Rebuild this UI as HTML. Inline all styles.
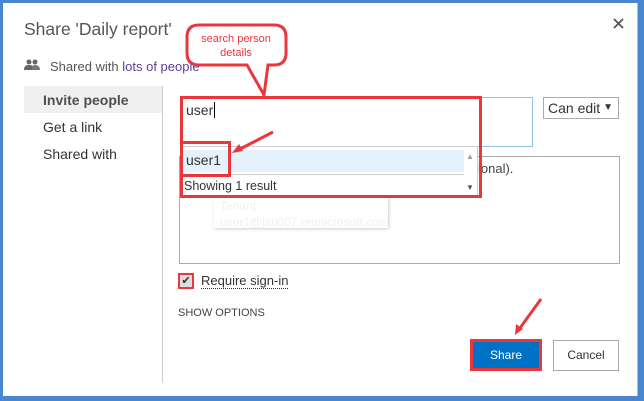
<!DOCTYPE html>
<html><head><meta charset="utf-8"><style>
body{margin:0;width:644px;height:401px;overflow:hidden;background:#4a85d0;font-family:"Liberation Sans",sans-serif;position:relative}
.a{position:absolute}
</style></head><body>
<div class="a" style="left:3px;top:3px;width:634px;height:393px;background:#fff;border-right:1px solid #bbb"></div>
<div class="a" style="left:24px;top:19px;font-size:17.5px;color:#555">Share 'Daily report'</div>
<svg class="a" style="left:613px;top:18px" width="11" height="11"><path d="M1 1L10 10M10 1L1 10" stroke="#555" stroke-width="1.8"/></svg>
<svg class="a" style="left:24px;top:59px" width="16" height="12" viewBox="0 0 16 12"><circle cx="5" cy="3" r="2.5" fill="#666"/><circle cx="11" cy="3" r="2.5" fill="#666"/><path d="M0 11c0-4 2-5 5-5s5 1 5 5z" fill="#666"/><path d="M8 11c0-4 1-5 3-5s5 1 5 5z" fill="#777"/></svg>
<div class="a" style="left:50px;top:59px;font-size:13px;color:#555">Shared with <span style="color:#5a3d99">lots of people</span></div>
<div class="a" style="left:24px;top:86px;width:138px;height:27px;background:#f0f0f0"></div>
<div class="a" style="left:162px;top:86px;width:1px;height:297px;background:#ccc"></div>
<div class="a" style="left:43px;top:92px;font-size:14px;color:#333;font-weight:bold;opacity:.85">Invite people</div>
<div class="a" style="left:43px;top:119px;font-size:14px;color:#333">Get a link</div>
<div class="a" style="left:43px;top:146px;font-size:14px;color:#333">Shared with</div>
<div class="a" style="left:180px;top:97px;width:351px;height:48px;border:1px solid #8ec3e8"></div>
<div class="a" style="left:186px;top:102px;font-size:14px;color:#333">user<span style="border-left:1px solid #000;margin-left:1px"></span></div>
<div class="a" style="left:543px;top:97px;border:1px solid #aaa;font-size:14px;color:#333;line-height:20px;padding-left:4px;box-sizing:border-box;width:76px;height:22px">Can edit <span style="font-size:10px;position:absolute;right:5px">▼</span></div>
<div class="a" style="left:179px;top:156px;width:439px;height:106px;border:1px solid #aaa"></div>
<div class="a" style="left:478px;top:161px;font-size:13px;color:#444">ional).</div>
<div class="a" style="left:214px;top:180px;width:174px;height:48px;box-shadow:1px 1px 3px #ccc;font-size:12px;color:#f0f0f0;line-height:16px;padding:2px 6px;box-sizing:border-box">Tenant<br>Tenant<br>user1@jsb007.onmicrosoft.com</div>
<div class="a" style="left:181px;top:146px;width:295px;height:49px;background:#fff;border:1px solid #ccc"></div>
<div class="a" style="left:182px;top:150px;width:282px;height:22px;background:#e5f1fb"></div>
<div class="a" style="left:186px;top:152px;font-size:14px;color:#333">user1</div>
<div class="a" style="left:182px;top:174px;width:282px;height:1px;background:#ccc"></div>
<div class="a" style="left:184px;top:179px;font-size:12.5px;color:#333">Showing 1 result</div>
<div class="a" style="left:466px;top:152px;font-size:8px;color:#999">▲</div>
<div class="a" style="left:466px;top:183px;font-size:8px;color:#555">▼</div>
<div class="a" style="left:180px;top:96px;width:296px;height:96px;border:3px solid #e8383d"></div>
<div class="a" style="left:180px;top:141px;width:45px;height:30px;border:3px solid #e8383d"></div>
<div class="a" style="left:178px;top:273px;width:12px;height:12px;border:2px solid #e8383d;background:#ddd;font-size:11px;line-height:12px;text-align:center;color:#333">✔</div>
<div class="a" style="left:201px;top:273px;font-size:13px;color:#333;border-bottom:1px dotted #333">Require sign-in</div>
<div class="a" style="left:178px;top:307px;font-size:11px;color:#444">SHOW OPTIONS</div>
<div class="a" style="left:470px;top:339px;width:66px;height:26px;border:3px solid #e8383d;background:#0072c6;color:#fff;font-size:12px;text-align:center;line-height:26px">Share</div>
<div class="a" style="left:553px;top:340px;width:64px;height:29px;border:1px solid #aaa;color:#333;font-size:12px;text-align:center;line-height:29px">Cancel</div>
<svg class="a" style="left:0;top:0" width="644" height="401">
<path d="M199 25h75q12 0 12 12v16q0 12-12 12h-6l-4 30l-17-30h-48q-12 0-12-12v-16q0-12 12-12z" fill="#fff" stroke="#e8383d" stroke-width="3"/>
<text x="236" y="42" font-size="11" fill="#e8383d" text-anchor="middle" font-family="Liberation Sans">search  person</text>
<text x="236" y="56" font-size="11" fill="#e8383d" text-anchor="middle" font-family="Liberation Sans">details</text>
<path d="M273 132L240 149" stroke="#e8383d" stroke-width="3"/><path d="M232 153l7-9 4 7z" fill="#e8383d"/>
<path d="M541 299L520 328" stroke="#e8383d" stroke-width="3"/><path d="M515 335l1-11 7 5z" fill="#e8383d"/>
</svg>
</body></html>
